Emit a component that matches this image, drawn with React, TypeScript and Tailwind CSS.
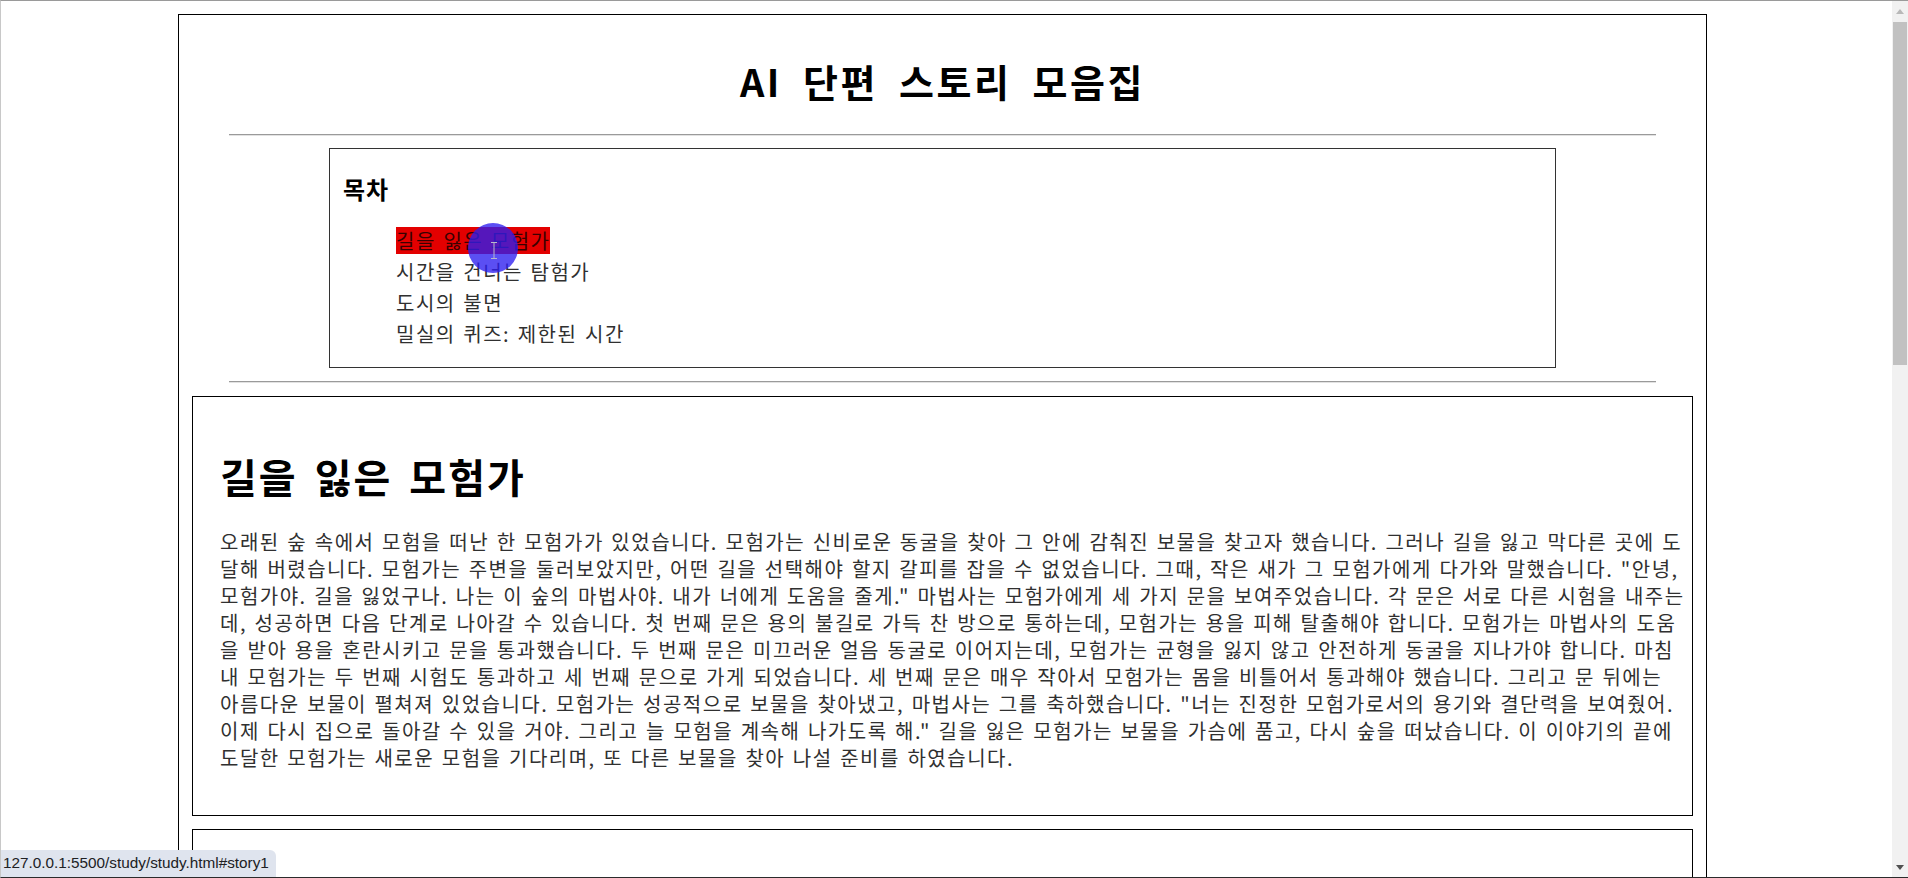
import React from 'react';

const tocItems = ['길을 잃은 모험가', '시간을 건너는 탐험가', '도시의 불면', '밀실의 퀴즈: 제한된 시간'];

// lines broken where the reference breaks them
const storyLines = [
  '오래된 숲 속에서 모험을 떠난 한 모험가가 있었습니다. 모험가는 신비로운 동굴을 찾아 그 안에 감춰진 보물을 찾고자 했습니다. 그러나 길을 잃고 막다른 곳에 도',
  '달해 버렸습니다. 모험가는 주변을 둘러보았지만, 어떤 길을 선택해야 할지 갈피를 잡을 수 없었습니다. 그때, 작은 새가 그 모험가에게 다가와 말했습니다. "안녕,',
  '모험가야. 길을 잃었구나. 나는 이 숲의 마법사야. 내가 너에게 도움을 줄게." 마법사는 모험가에게 세 가지 문을 보여주었습니다. 각 문은 서로 다른 시험을 내주는',
  '데, 성공하면 다음 단계로 나아갈 수 있습니다. 첫 번째 문은 용의 불길로 가득 찬 방으로 통하는데, 모험가는 용을 피해 탈출해야 합니다. 모험가는 마법사의 도움',
  '을 받아 용을 혼란시키고 문을 통과했습니다. 두 번째 문은 미끄러운 얼음 동굴로 이어지는데, 모험가는 균형을 잃지 않고 안전하게 동굴을 지나가야 합니다. 마침',
  '내 모험가는 두 번째 시험도 통과하고 세 번째 문으로 가게 되었습니다. 세 번째 문은 매우 작아서 모험가는 몸을 비틀어서 통과해야 했습니다. 그리고 문 뒤에는',
  '아름다운 보물이 펼쳐져 있었습니다. 모험가는 성공적으로 보물을 찾아냈고, 마법사는 그를 축하했습니다. "너는 진정한 모험가로서의 용기와 결단력을 보여줬어.',
  '이제 다시 집으로 돌아갈 수 있을 거야. 그리고 늘 모험을 계속해 나가도록 해." 길을 잃은 모험가는 보물을 가슴에 품고, 다시 숲을 떠났습니다. 이 이야기의 끝에',
  '도달한 모험가는 새로운 모험을 기다리며, 또 다른 보물을 찾아 나설 준비를 하였습니다.',
];

const Rule = () => (
  <div className="px-[50px]">
    <hr className="h-0 border-0 border-t border-t-[#9a9a9a] border-b border-b-[#e2e2e2]" />
  </div>
);

export default function App() {
  return (
    <div className="relative flex h-[878px] w-[1908px] overflow-hidden border-t border-b border-l border-t-[#9a9a9a] border-b-[#2b2b2b] border-l-[#c8c8c8] bg-white font-['Noto_Sans_CJK_KR',sans-serif] text-black">
      <main className="flex-1 pl-[177px] pt-[13px]">
        <div className="w-[1529px] border border-black">
          <header className="px-[50px]">
            <h1 className="pt-[40px] text-center text-[38px] font-bold leading-[52px] tracking-[2.5px] [word-spacing:10px]">
              AI 단편 스토리 모음집
            </h1>
          </header>
          <div className="mt-[27px]">
            <Rule />
          </div>

          {/* 목차 */}
          <nav className="mx-auto mt-[12px] w-[1227px] border border-[#333] px-[13px]">
            <h3 className="mt-[26px] text-[24px] font-bold leading-[28px] tracking-[1px]">목차</h3>
            <ul className="mb-[18px] mt-[22px] pl-[53px] text-[20px] text-[#303030]">
              {tocItems.map((item, i) => (
                <li key={item} className="flex h-[31px] items-center">
                  <a
                    href={`#story${i + 1}`}
                    className={
                      i === 0
                        ? 'inline-block h-[27px] bg-[#e30000] leading-[27px] tracking-[1.5px] text-[#3a0000] [word-spacing:1.6px]'
                        : 'inline-block leading-[27px] tracking-[1.5px] [word-spacing:1.6px]'
                    }
                  >
                    {item}
                  </a>
                </li>
              ))}
            </ul>
          </nav>

          <div className="mt-[13px]">
            <Rule />
          </div>

          <section id="story1" className="mx-[13px] mt-[13px] border border-black px-[27px] pb-[44px] pt-[53px]">
            <h2 className="text-[40px] font-bold leading-[52px] tracking-[2px] [word-spacing:6px]">길을 잃은 모험가</h2>
            <p className="mt-[26px] whitespace-nowrap text-[20px] leading-[27px] tracking-[1.5px] text-[#303030] [word-spacing:1.6px]">
              {storyLines.map((line, i) => (
                <React.Fragment key={i}>
                  {line}
                  {i < storyLines.length - 1 && <br />}
                </React.Fragment>
              ))}
            </p>
          </section>

          {/* next story starts below the fold */}
          <section id="story2" className="mx-[13px] mt-[13px] h-[420px] border border-black" />
        </div>
      </main>

      {/* scrollbar */}
      <aside className="flex w-[16px] flex-col bg-[#f1f1f1]">
        <div className="flex h-[20px] items-center justify-center">
          <svg width="8" height="5" viewBox="0 0 8 5">
            <path d="M0 5 L4 0 L8 5 Z" fill="#b8b8b8" />
          </svg>
        </div>
        <div className="mx-[1px] mt-[1px] h-[343px] bg-[#c1c1c1]" />
        <div className="flex-1" />
        <div className="flex h-[20px] items-center justify-center">
          <svg width="8" height="5" viewBox="0 0 8 5">
            <path d="M0 0 L8 0 L4 5 Z" fill="#505050" />
          </svg>
        </div>
      </aside>

      {/* click indicator from the screen recording */}
      <div className="absolute left-[467px] top-[222px] flex h-[50px] w-[50px] items-center justify-center rounded-full bg-[rgba(45,30,240,0.78)]">
        <svg width="8" height="17" viewBox="0 0 8 17" className="ml-[1px] mt-[4px]">
          <path d="M1 0.5 H7 M4 0.5 V16.5 M1 16.5 H7" stroke="#b9b9c8" strokeWidth="1" fill="none" />
        </svg>
      </div>

      {/* link status bubble */}
      <div className="absolute bottom-0 left-0 flex h-[27px] w-[275px] items-center rounded-tr-[6px] bg-[#dfe4ee] pl-[2px] font-['Liberation_Sans',sans-serif] text-[15.3px] text-[#202124]">
        127.0.0.1:5500/study/study.html#story1
      </div>
    </div>
  );
}
